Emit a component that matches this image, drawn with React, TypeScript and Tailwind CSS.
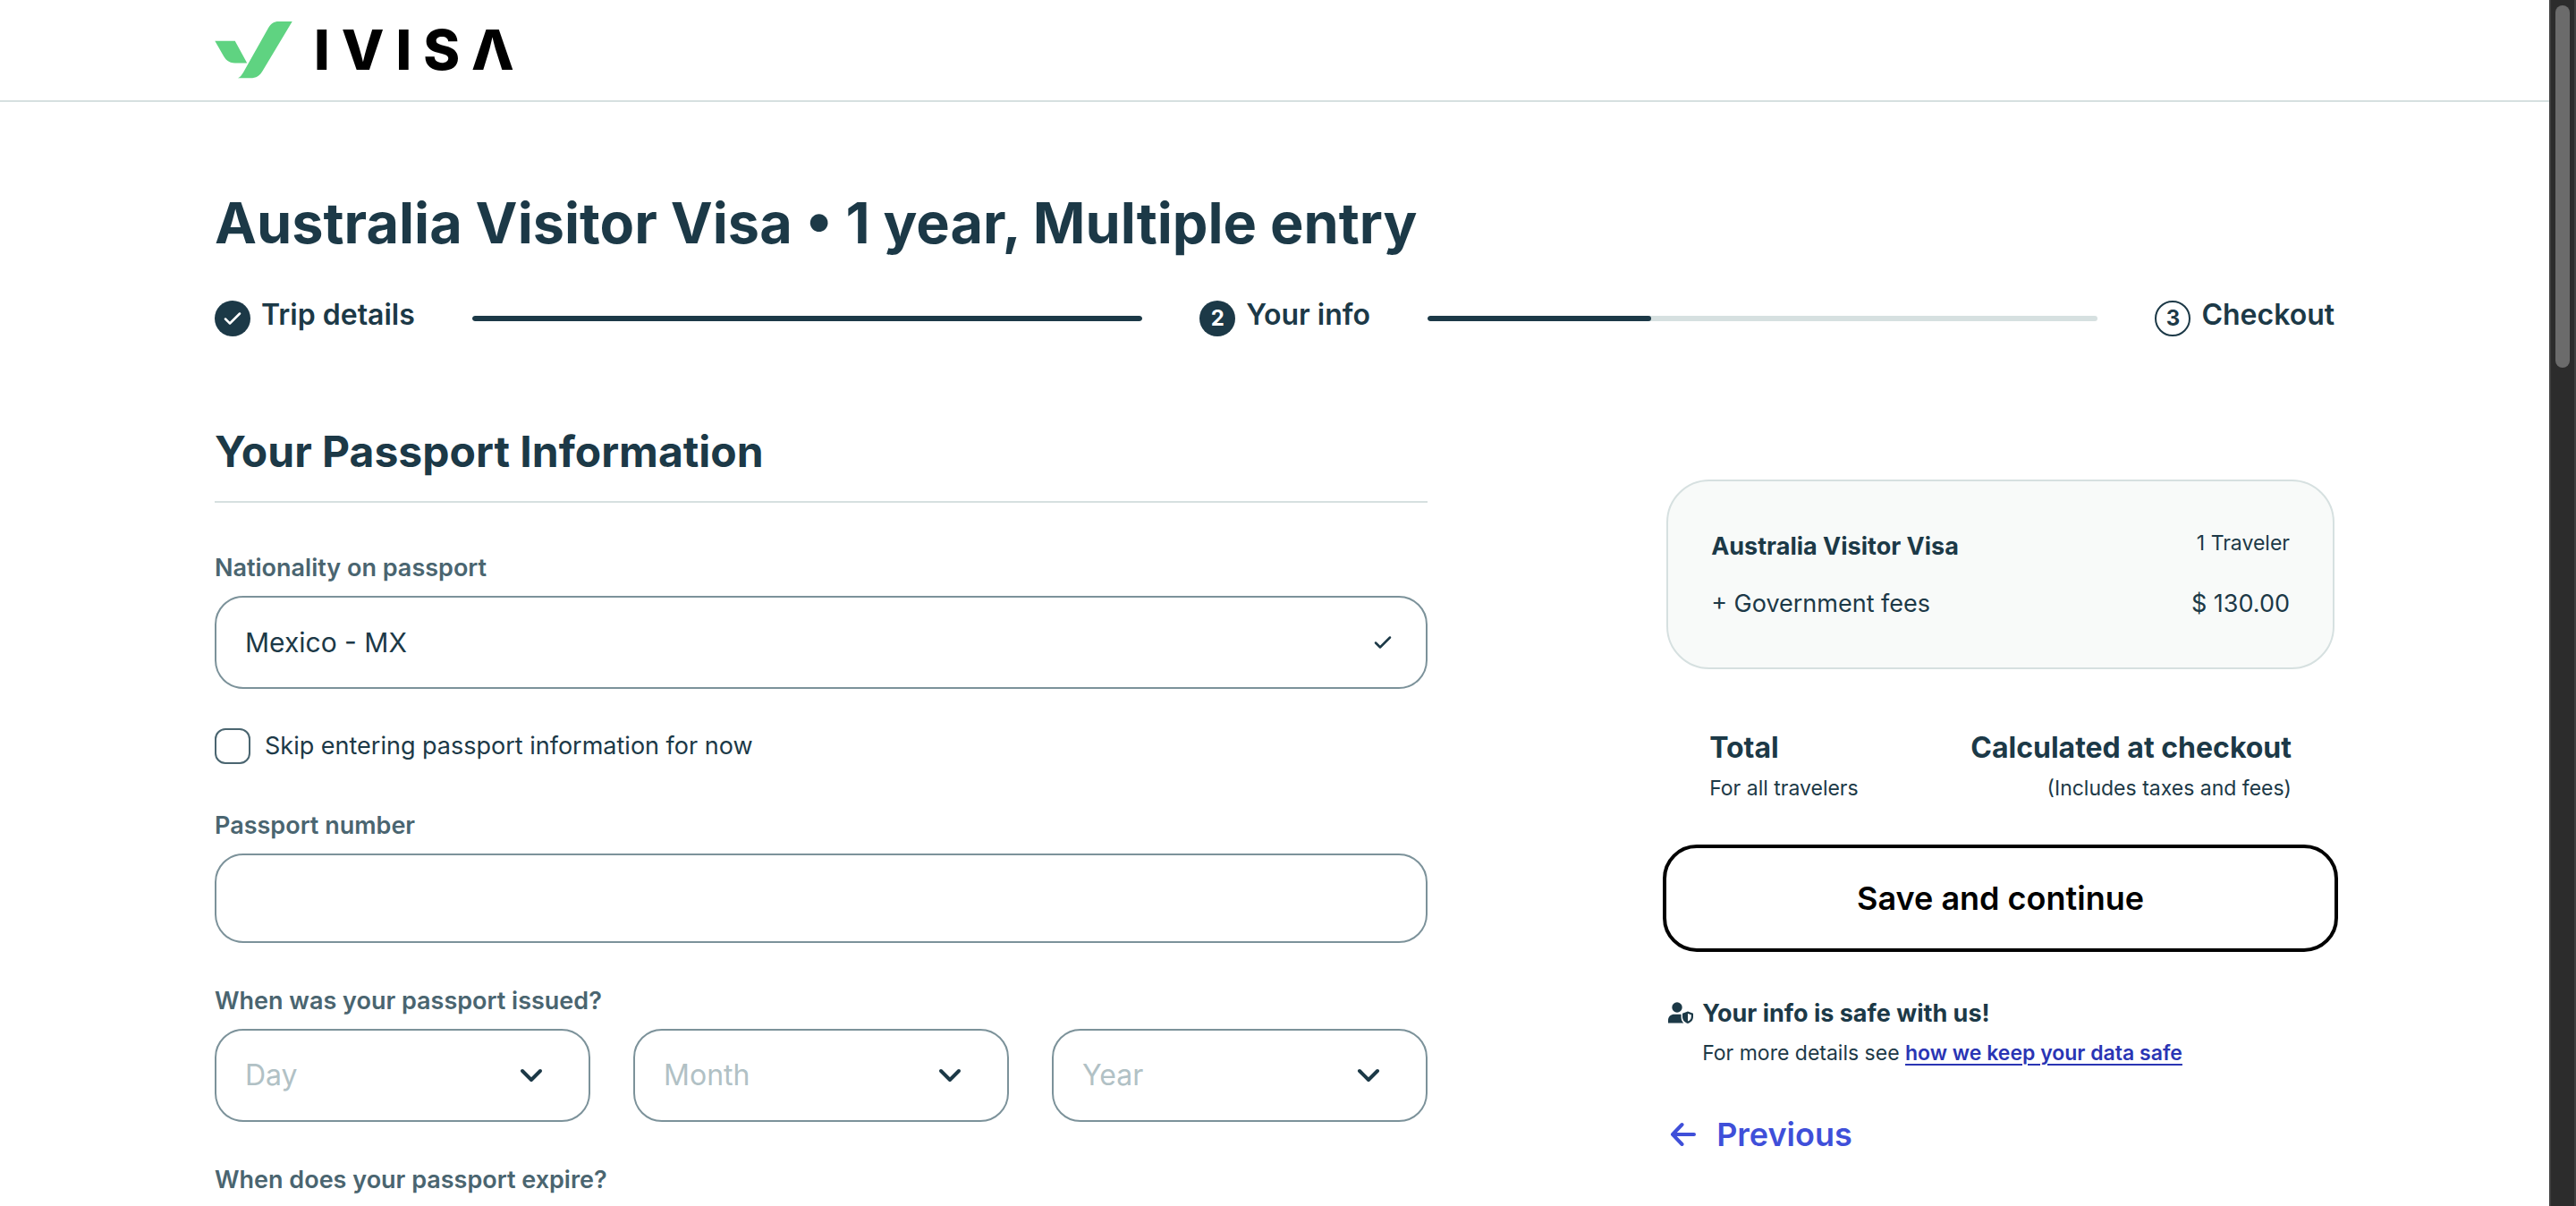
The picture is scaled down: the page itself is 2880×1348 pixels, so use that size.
import type { ReactNode } from "react";

function Logo() {
  return (
    <a href="#" aria-label="iVisa home" className="flex items-center gap-6 text-black">
      <svg viewBox="0 0 262 194" className="h-16 w-[87px]" fill="#5fd381" aria-hidden="true">
        <path d="M0 66H68L109 141H68C50 141 38 132 30 118Z" />
        <path d="M262 0L163 165C153 183 140 192 120 192H78C86 188 91 181 97 171L181 22C190 7 200 0 216 0Z" />
      </svg>
      <span className="text-[62px] leading-[64px] font-extrabold tracking-[13px]">IVISΛ</span>
    </a>
  );
}

function CheckMark({ className }: { className: string }) {
  return (
    <svg viewBox="0 0 20 16" className={className} fill="none" stroke="currentColor" strokeLinecap="round" strokeLinejoin="round" aria-hidden="true">
      <path d="M2 8.5L7 13.5L18 2.5" />
    </svg>
  );
}

function Step({ marker, label, filled }: { marker: ReactNode; label: string; filled: boolean }) {
  return (
    <li className="flex shrink-0 items-center gap-3">
      <span
        className={
          filled
            ? "flex size-10 items-center justify-center rounded-full bg-[#1c3947] text-2xl font-bold text-white"
            : "flex size-10 items-center justify-center rounded-full border-2 border-[#1c3947] text-2xl font-bold"
        }
      >
        {marker}
      </span>
      <span className="pb-2 text-[32px] leading-10 font-semibold">{label}</span>
    </li>
  );
}

function Bar({ progress }: { progress: number }) {
  return (
    <li aria-hidden="true" className="h-1.5 flex-1 overflow-hidden rounded-full bg-[#d6e0e0]">
      <div className="h-full rounded-full bg-[#1c3947]" style={{ width: `${progress}%` }} />
    </li>
  );
}

function DateSelect({ label }: { label: string }) {
  return (
    <div className="relative">
      <select
        aria-label={label}
        defaultValue=""
        className="h-[104px] w-full appearance-none rounded-[32px] border-2 border-[#7c929a] bg-white px-8 text-[32px] text-[#b1c1c5]"
      >
        <option value="">{label}</option>
      </select>
      <svg
        viewBox="0 0 26 16"
        className="pointer-events-none absolute top-11 right-[53px] h-4 w-[26px] text-[#1c3947]"
        fill="none"
        stroke="currentColor"
        strokeWidth="4"
        strokeLinecap="round"
        strokeLinejoin="round"
        aria-hidden="true"
      >
        <path d="M3 3L13 13L23 3" />
      </svg>
    </div>
  );
}

const fieldLabel = "block text-[27px] leading-10 font-semibold text-[#4a6570]";

function PassportForm() {
  return (
    <form>
      <h2 className="border-b-2 border-[#d6e0e0] pb-[25px] text-5xl leading-[60px] font-bold">Your Passport Information</h2>

      <label htmlFor="nationality" className={`mt-[53px] ${fieldLabel}`}>
        Nationality on passport
      </label>
      <div className="relative mt-[11px]">
        <select
          id="nationality"
          className="h-[104px] w-full appearance-none rounded-[32px] border-2 border-[#7c929a] bg-white px-8 text-[30px] text-[#1c3947]"
        >
          <option>Mexico - MX</option>
        </select>
        <CheckMark className="pointer-events-none absolute top-11 right-10 h-4 w-5 stroke-[2.5]" />
      </div>

      <label className="mt-11 flex items-center gap-4 text-[27px] leading-10">
        <input type="checkbox" className="size-10 appearance-none rounded-xl border-2 border-[#4a6570]" />
        Skip entering passport information for now
      </label>

      <label htmlFor="passport-number" className={`mt-[49px] ${fieldLabel}`}>
        Passport number
      </label>
      <input
        id="passport-number"
        type="text"
        className="mt-[11px] block h-[100px] w-full rounded-[32px] border-2 border-[#7c929a] bg-white px-8 text-[32px]"
      />

      <fieldset className="mt-[45px]">
        <legend className={fieldLabel}>When was your passport issued?</legend>
        <div className="mt-[11px] grid grid-cols-3 gap-12">
          <DateSelect label="Day" />
          <DateSelect label="Month" />
          <DateSelect label="Year" />
        </div>
      </fieldset>

      <p className={`mt-[45px] ${fieldLabel}`}>When does your passport expire?</p>
    </form>
  );
}

function Summary() {
  return (
    <aside className="mt-[61px]">
      <div className="rounded-[48px] border-2 border-[#d6e0e0] bg-[#f8faf9] px-12 pt-[53px] pb-[51px]">
        <div className="flex items-start justify-between">
          <span className="text-[27px] leading-10 font-bold">Australia Visitor Visa</span>
          <span className="text-[23px] leading-8">1 Traveler</span>
        </div>
        <div className="mt-6 flex justify-between text-[27px] leading-10">
          <span>+ Government fees</span>
          <span>$ 130.00</span>
        </div>
      </div>

      <div className="mt-[68px] flex justify-between px-12">
        <div>
          <p className="text-[32px] leading-10 font-bold">Total</p>
          <p className="mt-[9px] text-[23px] leading-8">For all travelers</p>
        </div>
        <div className="text-right">
          <p className="text-[32px] leading-10 font-bold">Calculated at checkout</p>
          <p className="mt-[9px] text-[23px] leading-8">(Includes taxes and fees)</p>
        </div>
      </div>

      <div className="-mx-1 mt-[47px]">
        <button type="button" className="h-[120px] w-full rounded-[38px] border-4 border-black bg-white text-4xl font-semibold text-black">
          Save and continue
        </button>
      </div>

      <div className="mt-[49px] flex gap-2.5 pl-0.5">
        <svg viewBox="0 0 28 24" className="mt-[7px] h-6 w-7 shrink-0" fill="#1c3947" aria-hidden="true">
          <circle cx="10" cy="6" r="5.7" />
          <path d="M0 23.5V20.5C0 16.5 3 13.8 7 13.8H14.6V17C14.6 19.8 15.6 22 17.4 23.5Z" />
          <path
            fillRule="evenodd"
            d="M22 10.5L28 12.8V16.4C28 20 25.6 22.7 22 24C18.4 22.7 16 20 16 16.4V12.8ZM22 12.9V21.6C24.4 20.5 25.8 18.7 25.8 16.4V14.3Z"
          />
        </svg>
        <div>
          <p className="text-[27px] leading-10 font-bold">Your info is safe with us!</p>
          <p className="mt-2 text-[23px] leading-8">
            For more details see{" "}
            <a href="#" className="font-semibold text-[#2a35b4] underline decoration-2 underline-offset-4">
              how we keep your data safe
            </a>
          </p>
        </div>
      </div>

      <button type="button" className="mt-[51px] flex items-center gap-[22px] pl-1 text-4xl leading-[48px] font-semibold text-[#3f4fd9]">
        <svg viewBox="0 0 30 28" className="h-7 w-[30px]" fill="none" stroke="currentColor" strokeWidth="4" strokeLinecap="round" strokeLinejoin="round" aria-hidden="true">
          <path d="M13.5 3L3 14L13.5 25M3 14H27" />
        </svg>
        Previous
      </button>
    </aside>
  );
}

export default function App() {
  return (
    <div className="flex h-screen overflow-hidden bg-white font-['Inter',sans-serif] text-[#1c3947]">
      <div className="min-w-0 flex-1">
        <header className="flex h-[114px] items-center border-b-2 border-[#d6e0e0] px-60">
          <Logo />
        </header>

        <main className="px-60 pt-[95px]">
          <h1 className="text-[63px] leading-[80px] font-bold">Australia Visitor Visa • 1 year, Multiple entry</h1>

          <ol className="mt-[43px] flex items-center gap-16">
            <Step filled marker={<CheckMark className="h-4 w-5 stroke-[2.5]" />} label="Trip details" />
            <Bar progress={100} />
            <Step filled marker="2" label="Your info" />
            <Bar progress={33.4} />
            <Step filled={false} marker="3" label="Checkout" />
          </ol>

          <div className="mt-[95px] grid grid-cols-[69fr_38fr] items-start gap-[267px]">
            <PassportForm />
            <Summary />
          </div>
        </main>
      </div>

      <div aria-hidden="true" className="flex w-[30px] justify-center border-x-2 border-[#404040] bg-[#2c2c2c] py-1.5">
        <div className="h-[405px] w-4 rounded-full bg-[#6b6b6b]" />
      </div>
    </div>
  );
}
